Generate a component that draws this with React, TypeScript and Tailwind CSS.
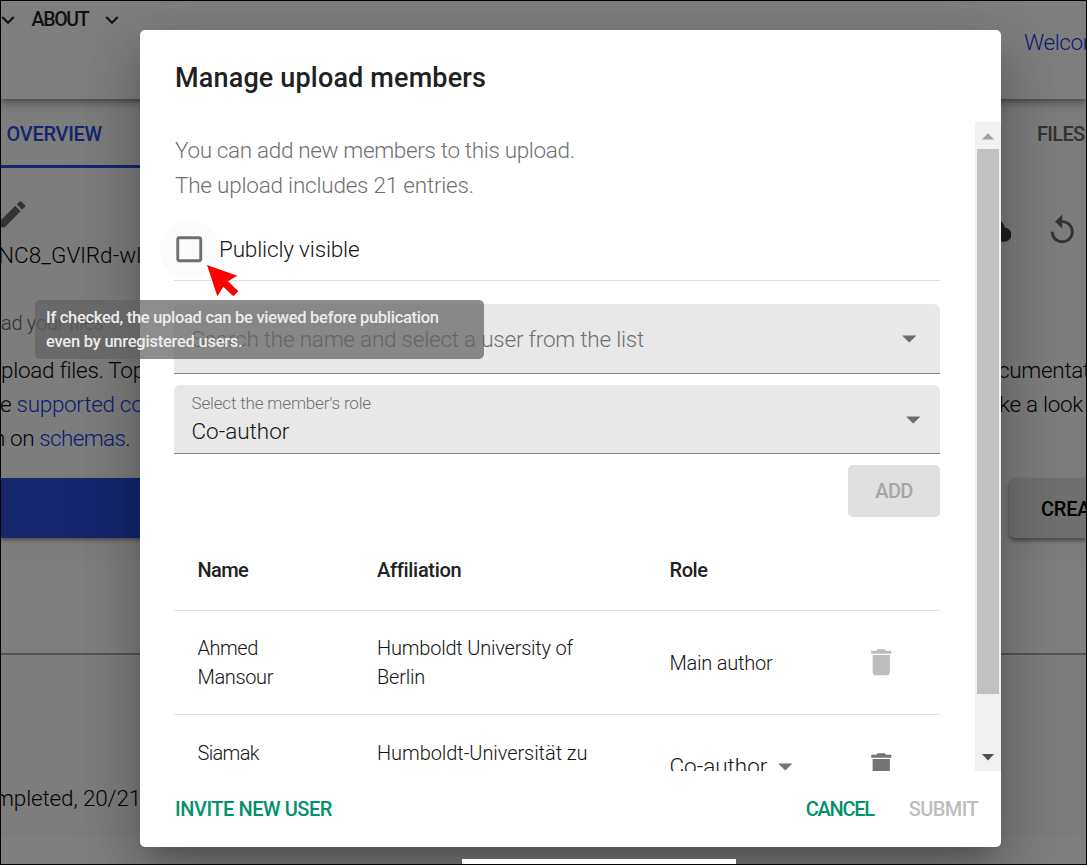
import type { ReactNode } from "react";
import {
  MdArrowDropDown,
  MdCheckBoxOutlineBlank,
  MdCloudUpload,
  MdDelete,
  MdEdit,
  MdExpandMore,
  MdReplay,
} from "react-icons/md";

function PageBehind() {
  return (
    <div className="isolate flex h-full flex-col overflow-hidden whitespace-nowrap bg-[#fafafa] text-[22.5px] font-light text-[#080808]">
      <header className="z-10 flex h-[98px] shrink-0 justify-between bg-white shadow-[0_3px_6px_-1px_rgba(0,0,0,0.35),0_6px_10px_rgba(0,0,0,0.16)]">
        <div className="flex h-[37px] items-center text-[19.5px] font-medium text-[#222]">
          <MdExpandMore className="-ml-[6.5px] size-[26px]" />
          <span className="ml-[11px] tracking-[-1.3px]">ABOUT</span>
          <MdExpandMore className="ml-[11px] size-[26px]" />
        </div>
        <a className="w-[62px] overflow-hidden pt-[25px] tracking-[-0.4px] text-[#2040dd]">Welcom</a>
      </header>

      <nav className="flex h-[69px] shrink-0 justify-between text-[20px] font-medium">
        <div className="flex w-[140px] items-center border-b-[3px] border-[#2a4cdf] pl-[5.5px] pt-[3px] tracking-[-0.28px] text-[#2a4cdf]">
          OVERVIEW
        </div>
        <div className="flex w-[49px] items-center tracking-[-0.7px] text-[#666]">FILES</div>
      </nav>

      <div className="flex h-[67px] shrink-0 justify-between text-[#666]">
        <MdEdit className="-ml-[6.5px] mt-[29px] size-[34.5px]" />
        <div className="mt-[45px] flex gap-[34px] pr-[6.5px]">
          <MdCloudUpload className="size-[34.5px] text-[#444]" />
          <MdReplay className="size-[34.5px] text-[#666]" />
        </div>
      </div>
      <div className="flex h-[42px] shrink-0 items-center">
        <span className="-ml-[3px] tracking-[0.08px]">NC8_GVlRd-wl</span>
      </div>
      <div className="mt-[26px] flex h-[40px] shrink-0 items-center text-[20px] tracking-[-0.28px] text-[#666]">
        ad your files
      </div>

      <div className="mt-[10px] flex h-[34px] shrink-0 items-center justify-between pt-px">
        <span className="tracking-[-0.3px]">pload files. Top</span>
        <span className="w-[88px] overflow-hidden tracking-[-0.3px]">cumentat</span>
      </div>
      <div className="flex h-[34px] shrink-0 items-center justify-between pt-px tracking-[-0.3px]">
        <span className="-ml-[1px]">
          e <a className="text-[#2040dd]">supported co</a>
        </span>
        <span className="w-[87px]">ke a look</span>
      </div>
      <div className="flex h-[34px] shrink-0 items-center pt-px">
        <span className="-ml-[8px] tracking-[-0.4px]">
          n on <a className="tracking-[-0.65px] text-[#2040dd]">schemas</a>.
        </span>
      </div>

      <div className="mt-[23px] flex h-[60px] shrink-0 justify-between text-[20px] font-medium">
        <div className="w-[240px] bg-[#2a4cdf] shadow-[0_2px_4px_rgba(0,0,0,0.4)]" />
        <div className="flex w-[77px] items-center rounded-l-[6px] bg-[#e0e0e0] pl-[32px] pt-px tracking-[-0.2px] text-black shadow-[0_3px_4px_rgba(0,0,0,0.4)]">
          CREA
        </div>
      </div>

      <div className="mt-[24px] h-[93px] shrink-0 border-b-2 border-[#a6a6a6] bg-white" />
      <div className="flex h-[182px] shrink-0 items-end pb-[21px]">
        <span className="-ml-[7px] tracking-[-0.15px]">mpleted, 20/21</span>
      </div>
      <div className="grow bg-white" />
    </div>
  );
}

function Field({ children, arrow }: { children: ReactNode; arrow: string }) {
  return (
    <div className="flex w-full items-center justify-between rounded-t-[6px] border-b border-[#868686] bg-[#e8e8e8] pl-[17.5px]">
      {children}
      <MdArrowDropDown className={"size-[34.5px] text-[#6b6b6b] " + arrow} />
    </div>
  );
}

const columns = "grid grid-cols-[179.5px_292.5px_176px_1fr] items-center border-b border-[#e0e0e0] pl-[23.5px]";

function MembersTable() {
  return (
    <div className="mt-[13px] text-[20px] leading-[28.7px]">
      <div className={columns + " h-[81px] font-medium text-[#212121]"}>
        <span className="tracking-[-0.6px]">Name</span>
        <span className="tracking-[-0.3px]">Affiliation</span>
        <span className="tracking-[-0.45px]">Role</span>
      </div>
      <div className={columns + " h-[104px]"}>
        <span>
          <span className="tracking-[-0.45px]">Ahmed</span>
          <br />
          <span className="tracking-[-0.35px]">Mansour</span>
        </span>
        <span className="tracking-[-0.21px]">
          Humboldt University of
          <br />
          Berlin
        </span>
        <span className="pt-px tracking-[-0.22px]">Main author</span>
        <MdDelete className="ml-[18.5px] size-[34.5px] text-[#bdbdbd]" />
      </div>
      <div className={columns + " h-[104px]"}>
        <span className="pb-[27px] tracking-[-0.65px]">Siamak</span>
        <span className="pb-[27px] tracking-[-0.07px]">Humboldt-Universität zu</span>
        <span className="flex items-center text-[22.5px]">
          Co-author
          <MdArrowDropDown className="ml-px size-[34.5px] text-[#757575]" />
        </span>
        <MdDelete className="ml-[18.5px] size-[34.5px] text-[#757575]" />
      </div>
    </div>
  );
}

function Scrollbar() {
  return (
    <div className="flex w-[26px] shrink-0 flex-col items-center bg-[#f1f1f1]">
      <svg className="h-[27px] w-[26px] shrink-0" viewBox="0 0 26 27">
        <path d="M7 17.5h12l-6-6.5z" fill="#a3a3a3" />
      </svg>
      <div className="h-[545px] w-[22.5px] bg-[#c1c1c1]" />
      <svg className="mt-auto h-[27px] w-[26px] shrink-0" viewBox="0 0 26 27">
        <path d="M7 10h12l-6 6.5z" fill="#505050" />
      </svg>
    </div>
  );
}

function Dialog() {
  return (
    <div className="absolute left-[139px] top-[29px] flex h-[817px] w-[861px] flex-col rounded-[5px] bg-white font-light text-[#141414] shadow-[0_16px_22px_-10px_rgba(0,0,0,0.2),0_35px_55px_4px_rgba(0,0,0,0.14),0_13px_66px_12px_rgba(0,0,0,0.12)]">
      <h2 className="flex h-[92px] shrink-0 items-center pl-[35px] pt-[5px] text-[27px] font-medium tracking-[0.16px] text-[#212121]">
        Manage upload members
      </h2>
      <div className="flex h-[649px] shrink-0 overflow-hidden">
        <div className="ml-[34px] w-[766px] shrink-0 pt-[11px]">
          <div className="pl-[1px] text-[22.5px] leading-[35px] text-[#707070]">
            <p className="tracking-[-0.34px]">You can add new members to this upload.</p>
            <p className="tracking-[-0.22px]">The upload includes 21 entries.</p>
          </div>
          <div className="mt-[15px] flex h-[63px] items-center border-b border-[#e0e0e0] text-[22.5px]">
            <span className="-ml-[14px] flex size-[59px] items-center justify-center rounded-full bg-[#fafcfb]">
              <MdCheckBoxOutlineBlank className="size-[34.5px] text-[#6e6e6e]" />
            </span>
            <span className="pt-[2px] tracking-[-0.17px]">Publicly visible</span>
          </div>
          <div className="mt-[23px] flex h-[70px]">
            <Field arrow="mr-[13.5px]">
              <span className="pt-[3px] text-[22.5px] tracking-[-0.22px] text-[#707070]">
                Search the name and select a user from the list
              </span>
            </Field>
          </div>
          <div className="mt-[11px] flex h-[68.5px]">
            <Field arrow="mr-[10px]">
              <span className="flex flex-col pb-[2px]">
                <span className="text-[17px] leading-[27px] tracking-[-0.16px] text-[#707070]">
                  Select the member's role
                </span>
                <span className="text-[22.5px] leading-[28px]">Co-author</span>
              </span>
            </Field>
          </div>
          <div className="mt-[11.5px] flex justify-end">
            <button className="h-[52px] w-[92px] rounded-[5px] bg-[#e0e0e0] text-[20px] font-medium tracking-[-0.7px] text-[#a6a6a6]">
              ADD
            </button>
          </div>
          <MembersTable />
        </div>
        <div className="ml-auto flex">
          <Scrollbar />
        </div>
      </div>
      <footer className="flex grow items-center pl-[35px] pr-[23px] text-[20px] font-medium text-[#00916e]">
        <button className="tracking-[-0.45px]">INVITE NEW USER</button>
        <button className="ml-auto tracking-[-1.3px]">CANCEL</button>
        <button className="ml-[35px] tracking-[-0.6px] text-[#bdbdbd]">SUBMIT</button>
      </footer>
    </div>
  );
}

export default function App() {
  return (
    <div className="relative h-[865px] w-[1087px] overflow-hidden border border-black font-['Roboto',sans-serif]">
      <PageBehind />
      <div className="absolute inset-0 bg-black/50" />
      <Dialog />
      <svg className="absolute left-[205px] top-[263px] size-[33px]" viewBox="0 0 99 99">
        <path d="M3 3 94 35 66 52 97 82 82 97 52 68 34 97z" fill="#ff0000" />
      </svg>
      <div className="absolute left-[34px] top-[299px] h-[59px] w-[449px] whitespace-nowrap rounded-[5px] bg-[#616161]/72 pl-[11px] pt-[6px] text-[16.5px] font-medium leading-[24px] text-[#ececec]">
        <p className="tracking-[-0.29px]">If checked, the upload can be viewed before publication</p>
        <p className="tracking-[-0.24px]">even by unregistered users.</p>
      </div>
      <div className="absolute bottom-0 left-[461px] h-[5px] w-[274px] bg-white" />
    </div>
  );
}
